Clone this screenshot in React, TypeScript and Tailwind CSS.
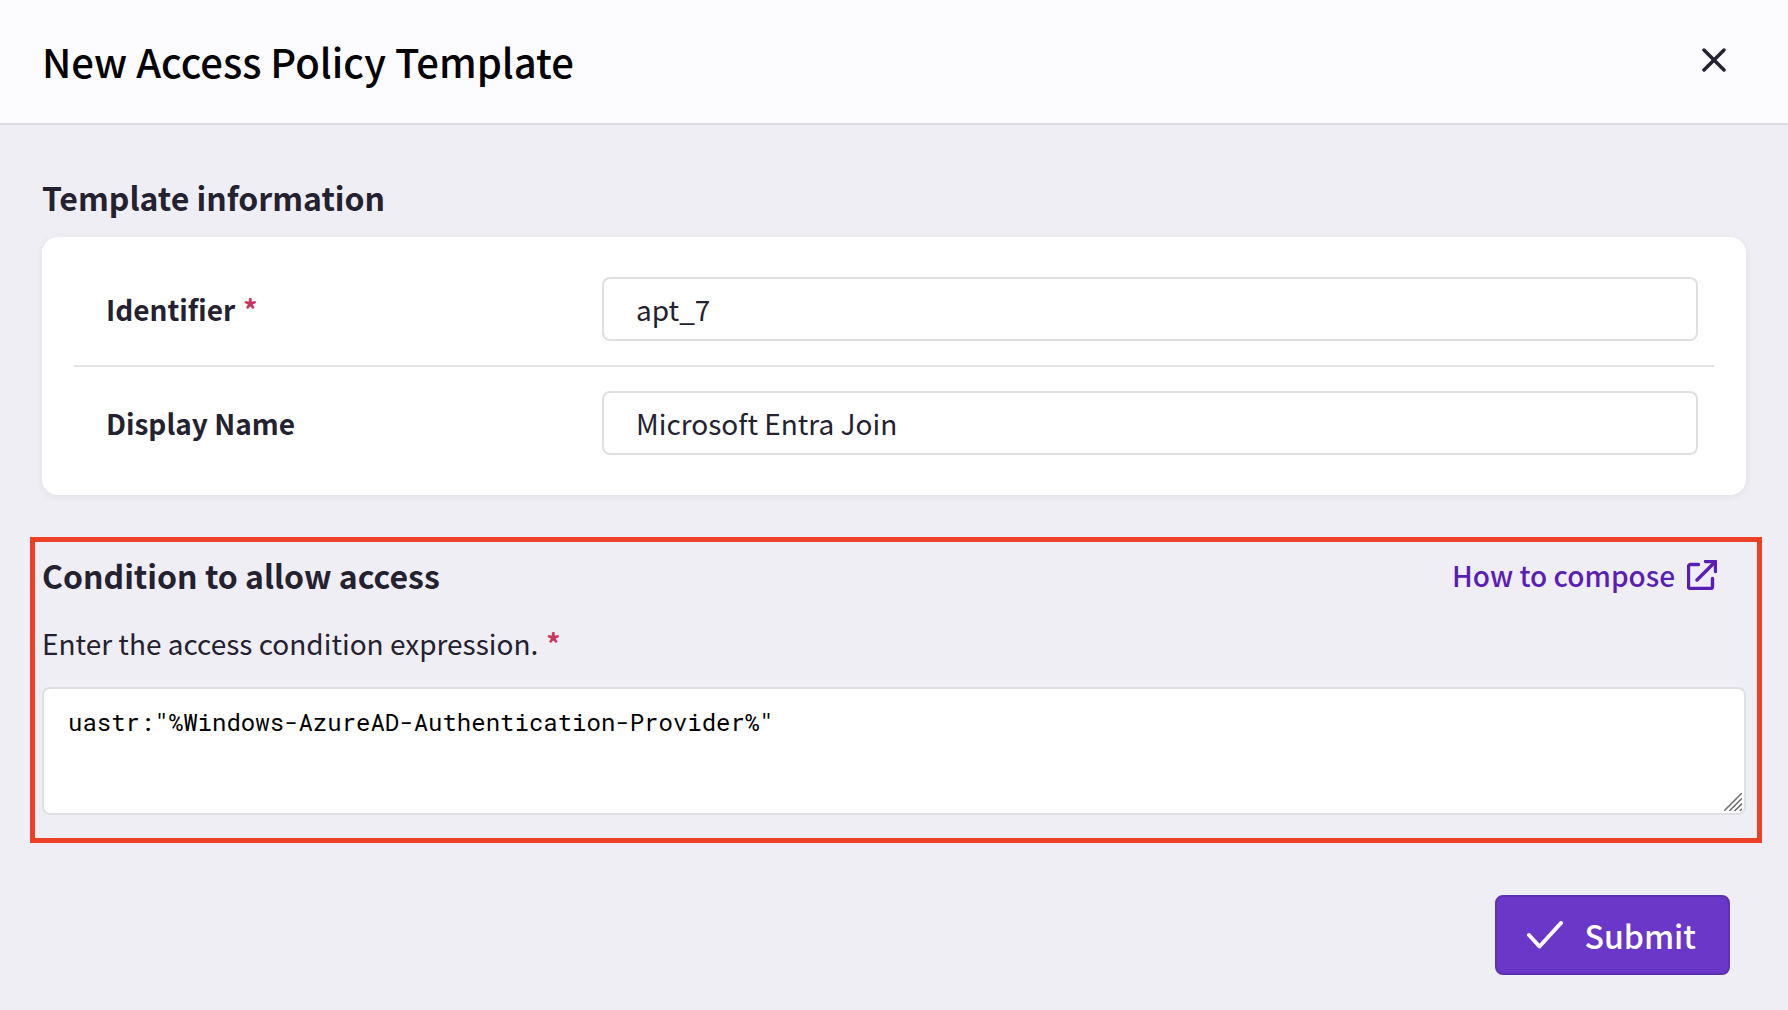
import { useState, type ReactNode } from "react";

function Required() {
  return (
    <span aria-hidden="true" className="ml-2 font-bold text-[#c7365f]">
      *
    </span>
  );
}

function CloseIcon() {
  return (
    <svg viewBox="0 0 24 24" className="size-6" fill="none" stroke="currentColor" strokeWidth="3.5" strokeLinecap="round">
      <path d="M2 2 22 22M22 2 2 22" />
    </svg>
  );
}

function ExternalIcon() {
  return (
    <svg
      viewBox="0 0 30 30"
      className="size-[30px]"
      fill="none"
      stroke="currentColor"
      strokeWidth="3.4"
      strokeLinecap="round"
      strokeLinejoin="round"
    >
      <path d="M11.5 4.5h-8a2 2 0 0 0-2 2v20a2 2 0 0 0 2 2h20a2 2 0 0 0 2-2v-8" />
      <path d="M10 20 28.5 1.5M18.5 1.5h10v10" />
    </svg>
  );
}

function CheckIcon() {
  return (
    <svg
      viewBox="0 0 36 28"
      className="h-7 w-9"
      fill="none"
      stroke="currentColor"
      strokeWidth="4"
      strokeLinecap="round"
      strokeLinejoin="round"
    >
      <path d="M2 14 12.5 25.5 34 2" />
    </svg>
  );
}

function ResizeGrip() {
  return (
    <svg
      viewBox="0 0 18 18"
      className="pointer-events-none absolute right-1 bottom-1 size-[18px]"
      fill="none"
      stroke="#6b6b6b"
      strokeWidth="1.5"
    >
      <path d="M0 18 18 0M5.3 18 18 5.3M10.6 18 18 10.6M15.9 18 18 15.9" />
    </svg>
  );
}

type FieldProps = {
  id: string;
  label: string;
  required?: boolean;
  value: string;
  onChange: (value: string) => void;
};

function Field({ id, label, required, value, onChange }: FieldProps) {
  return (
    <div className="flex items-center py-6 pr-4 pl-8">
      <label htmlFor={id} className="w-[496px] shrink-0 text-[28px] leading-10 font-bold">
        {label}
        {required && <Required />}
      </label>
      <input
        id={id}
        type="text"
        required={required}
        value={value}
        onChange={(e) => onChange(e.target.value)}
        className="h-16 min-w-0 flex-1 rounded-lg border-2 border-[#e0e0e2] bg-white px-8 text-[28px] outline-none"
      />
    </div>
  );
}

function SectionTitle({ children }: { children: ReactNode }) {
  return <h2 className="text-[32px] leading-10 font-bold">{children}</h2>;
}

export default function App() {
  const [identifier, setIdentifier] = useState("apt_7");
  const [displayName, setDisplayName] = useState("Microsoft Entra Join");
  const [condition, setCondition] = useState('uastr:"%Windows-AzureAD-Authentication-Provider%"');

  return (
    <div className="min-h-screen bg-[#efeef4] font-['Noto_Sans_CJK_JP',sans-serif] text-[#242130]">
      <header className="flex items-center justify-between border-b-2 border-[#dddde1] bg-[#fcfcfe] py-8 pr-[62px] pl-[42px]">
        <h1 className="text-[40px] leading-[59px] font-medium text-black">New Access Policy Template</h1>
        <button type="button" aria-label="Close" className="pb-1">
          <CloseIcon />
        </button>
      </header>

      <form onSubmit={(e) => e.preventDefault()} className="pt-[52px] pb-8">
        <section className="mx-[42px]">
          <SectionTitle>Template information</SectionTitle>
          <div className="mt-5 divide-y-2 divide-[#e4e3ea] rounded-2xl bg-white px-8 py-4 shadow-[0_2px_8px_rgba(36,33,48,0.06)]">
            <Field id="identifier" label="Identifier" required value={identifier} onChange={setIdentifier} />
            <Field id="display-name" label="Display Name" value={displayName} onChange={setDisplayName} />
          </div>
        </section>

        <section className="mt-[42px] mr-[26px] ml-[30px] border-[5px] border-[#ec4126] pt-[13px] pr-[11px] pb-[23px] pl-[7px]">
          <div className="flex items-center justify-between pr-[29px]">
            <SectionTitle>Condition to allow access</SectionTitle>
            <a href="#compose" className="flex items-center gap-3 text-[28px] leading-10 font-medium text-[#5a1eb4]">
              How to compose
              <ExternalIcon />
            </a>
          </div>
          <label htmlFor="condition" className="mt-7 block text-[28px] leading-10">
            Enter the access condition expression.
            <Required />
          </label>
          <div className="relative mt-6">
            <textarea
              id="condition"
              required
              value={condition}
              onChange={(e) => setCondition(e.target.value)}
              className="block h-32 w-full resize-y rounded-lg border-2 border-[#e0e0e2] bg-white px-6 py-4 font-['Roboto_Mono','Liberation_Mono',monospace] text-2xl leading-[34px] text-black outline-none [&::-webkit-resizer]:bg-transparent"
            />
            <ResizeGrip />
          </div>
        </section>

        <div className="mt-[52px] mr-[58px] flex justify-end">
          <button
            type="submit"
            className="flex h-20 items-center gap-[22px] rounded-lg border-2 border-[#5e30b4] bg-[#6a37c8] pr-8 pl-[30px] text-[32px] font-medium text-white"
          >
            <CheckIcon />
            Submit
          </button>
        </div>
      </form>
    </div>
  );
}
